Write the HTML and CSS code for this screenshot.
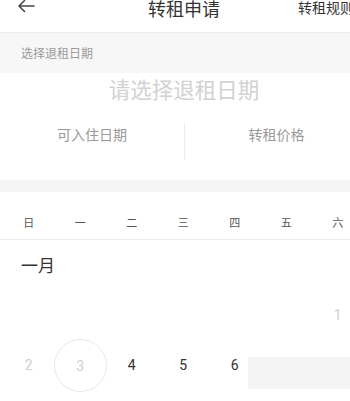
FILE: index.html
```html
<!DOCTYPE html>
<html lang="zh-CN">
<head>
<meta charset="utf-8">
<link rel="stylesheet" href="styles.css">
</head>
<body>
<div class="page">
  <header class="header">
    <div class="back">
      <svg width="18" height="14" viewBox="0 0 18 14" fill="none" stroke="#444" stroke-width="1.5" stroke-linecap="round" stroke-linejoin="round"><path d="M17 7H2M7.5 1.5 2 7l5.5 5.5"/></svg>
    </div>
    <div class="title">转租申请</div>
    <div class="rule">转租规则</div>
  </header>
  <div class="section-label">选择退租日期</div>
  <div class="prompt">请选择退租日期</div>
  <div class="info-row">
    <div class="info-cell">可入住日期</div>
    <div class="info-cell divided">转租价格</div>
  </div>
  <div class="gap-band"></div>
  <div class="week">
    <span>日</span><span>一</span><span>二</span><span>三</span><span>四</span><span>五</span><span>六</span>
  </div>
  <div class="month">一月</div>
  <div class="days">
    <span></span><span></span><span></span><span></span><span></span><span></span><span class="day past">1</span>
    <span class="day past">2</span><span class="day past today">3</span><span class="day">4</span><span class="day">5</span><span class="day">6</span><span class="day"></span><span class="day"></span>
    <div class="toast"></div>
  </div>
</div>
</body>
</html>
```
FILE: styles.css
```css
html, body {
  margin: 0;
  padding: 0;
  background: #fff;
  overflow: hidden;
}
body {
  width: 350px;
  height: 401px;
  font-family: "Noto Sans CJK SC", "Noto Sans", Roboto, sans-serif;
}
.page {
  width: 368px;
}
.header {
  height: 32px;
  display: grid;
  grid-template-columns: 1fr auto 1fr;
  align-items: start;
}
.back {
  padding-left: 17px;
  height: 14px;
  line-height: 0;
  margin-top: -1px;
}
.title {
  font-size: 18px;
  line-height: 16px;
  color: #333;
}
.rule {
  justify-self: end;
  padding-right: 14px;
  font-size: 14px;
  line-height: 15px;
  color: #333;
  white-space: nowrap;
}
.section-label {
  border-top: 1px solid #ececec;
  background: #f7f7f7;
  height: 40px;
  line-height: 40px;
  padding-left: 21px;
  font-size: 12px;
  color: #9a9a9a;
}
.prompt {
  height: 32px;
  line-height: 32px;
  text-align: center;
  font-size: 21.5px;
  color: #d2d2d2;
}
.info-row {
  display: grid;
  grid-template-columns: 1fr 1fr;
  padding-top: 18px;
  margin-bottom: 20px;
}
.info-cell {
  height: 37px;
  line-height: 22px;
  text-align: center;
  font-size: 14px;
  color: #999;
}
.info-cell.divided {
  border-left: 1px solid #ececec;
}
.gap-band {
  height: 12px;
  background: #f5f5f5;
}
.week {
  display: grid;
  grid-template-columns: repeat(7, 51.5px);
  padding: 20px 0 7px 3px;
  border-bottom: 1px solid #eeeeee;
  font-size: 11px;
  line-height: 20px;
  color: #555;
  text-align: center;
}
.month {
  padding: 15px 0 0 21px;
  font-size: 17px;
  line-height: 20px;
  color: #333;
}
.days {
  position: relative;
  display: grid;
  grid-template-columns: repeat(7, 51.5px);
  grid-auto-rows: 50px;
  padding: 15px 0 0 3px;
}
.day {
  display: flex;
  align-items: center;
  justify-content: center;
  font-family: Roboto, "Noto Sans", sans-serif;
  font-size: 14px;
  color: #333;
}
.day.past {
  color: #d0d0d0;
}
.day.today {
  width: 51px;
  height: 51px;
  margin: -1px 0 0 0;
  justify-self: center;
  border: 1px solid #e8e8e8;
  border-radius: 50%;
}
.toast {
  position: absolute;
  left: 248px;
  top: 82px;
  width: 120px;
  height: 32px;
  background: #f4f4f4;
}
```
